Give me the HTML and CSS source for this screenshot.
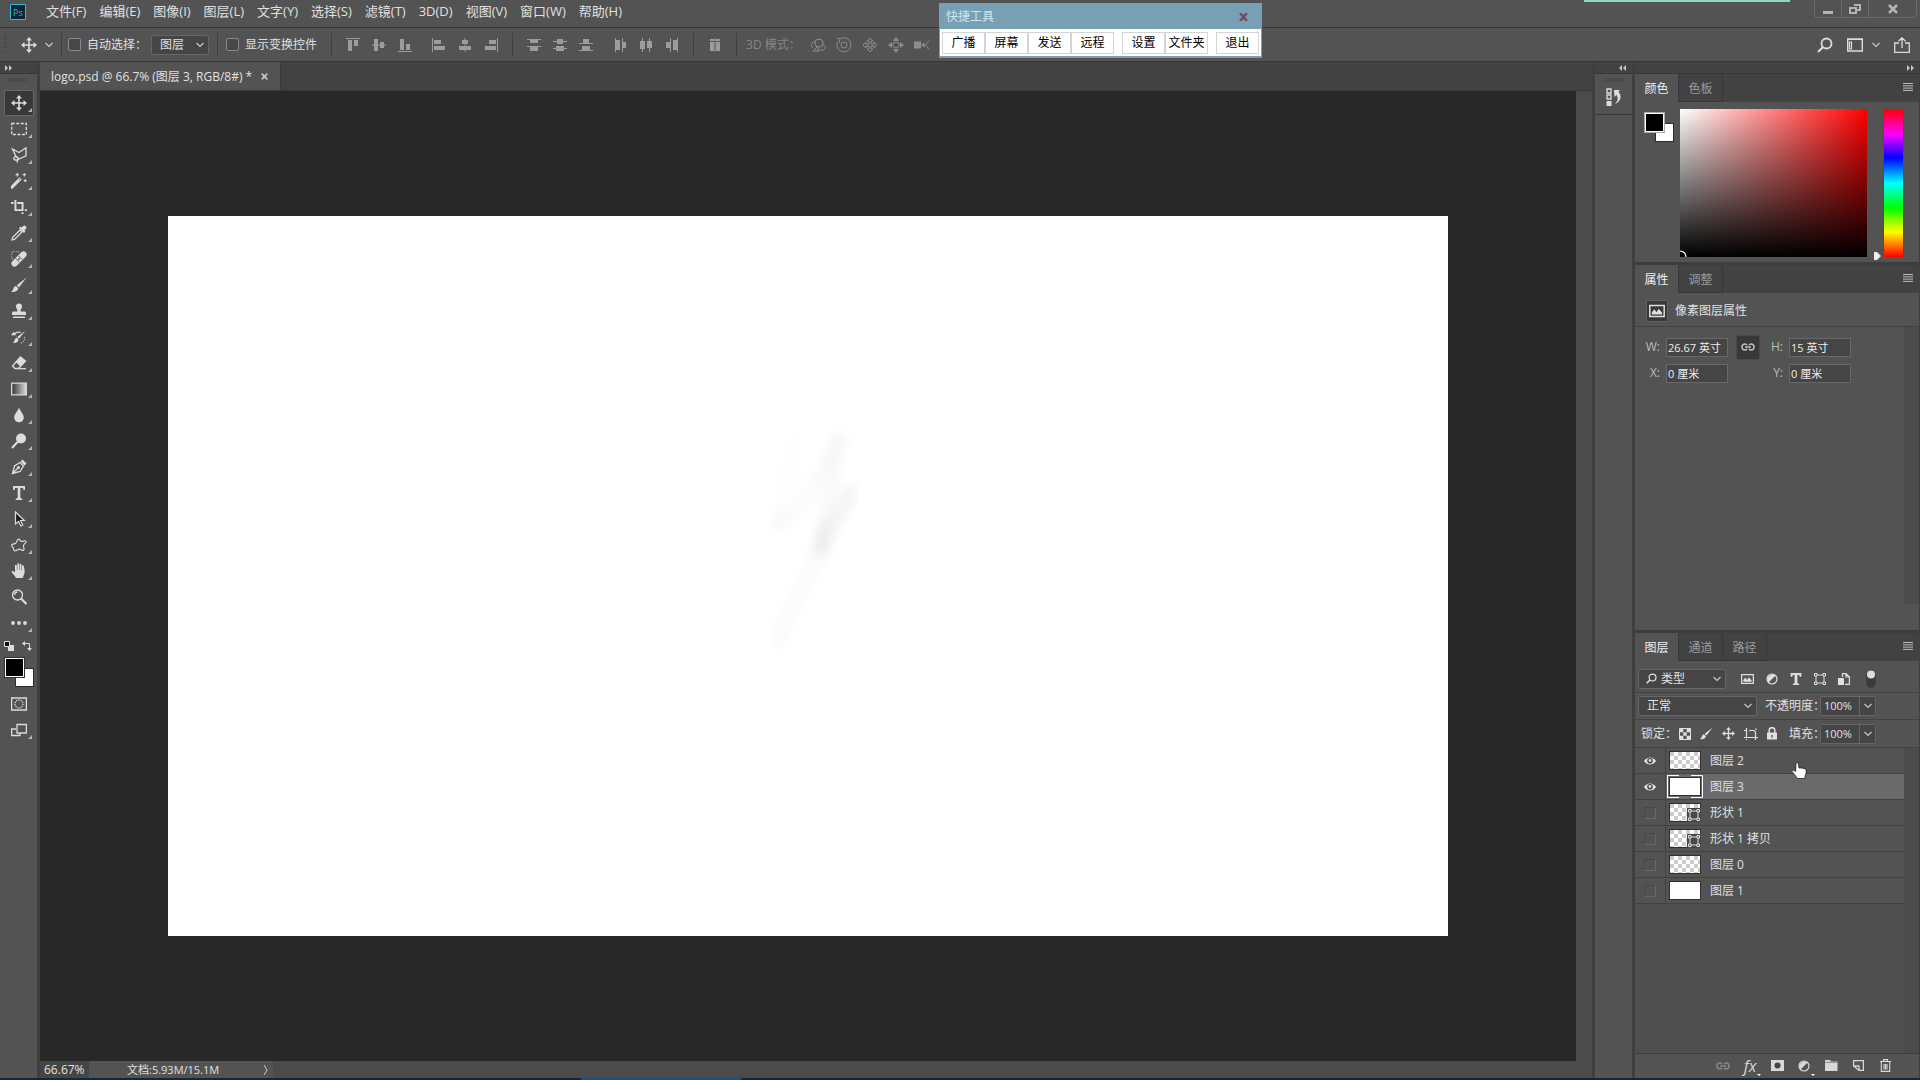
FILE: index.html
```html
<!DOCTYPE html>
<html lang="zh-CN">
<head>
<meta charset="utf-8">
<title>logo.psd</title>
<link rel="stylesheet" href="styles.css">
</head>
<body>
<svg class="sprite" aria-hidden="true">
  <symbol id="chev" viewBox="0 0 8 6"><path d="M0.5 1l3.5 3.500l3.500-3.500" fill="none" stroke="currentColor" stroke-width="1.200"/></symbol>
  <symbol id="move" viewBox="0 0 16 16"><path d="M8 0l3 3.500H8.800V7.200H12.500V5L16 8l-3.500 3V8.800H8.800v3.700H11L8 16l-3-3.500h2.200V8.800H3.500V11L0 8l3.500-3v2.200h3.700V3.500H5z" fill="currentColor"/></symbol>
  <symbol id="menu3" viewBox="0 0 10 8"><path d="M0 .5h10M0 2.800h10M0 5.100h10M0 7.400h10" stroke="currentColor"/></symbol>
  <symbol id="search" viewBox="0 0 16 16"><circle cx="9.500" cy="6.500" r="5" fill="none" stroke="currentColor" stroke-width="1.800"/><path d="M6 10l-5 5" stroke="currentColor" stroke-width="2.200"/></symbol>
  <symbol id="link" viewBox="0 0 14 8"><path d="M6 2.200C5.500 1.300 4.800 1 4 1a3 3 0 0 0 0 6c.8 0 1.500-.3 2-1.200M8 2.200C8.500 1.300 9.200 1 10 1a3 3 0 0 1 0 6c-.8 0-1.500-.3-2-1.200M4 4h6" fill="none" stroke="currentColor" stroke-width="1.500"/></symbol>
  <symbol id="brush" viewBox="0 0 16 16"><path d="M15.500.5L8 10.500 5.800 8.300z" fill="currentColor"/><path d="M5 9l2.300 2.300C7 14 4 15.500 0 15c2.500-1.200 2-5.500 5-6z" fill="currentColor"/></symbol>
  <symbol id="half" viewBox="0 0 12 12"><circle cx="6" cy="6" r="5" fill="none" stroke="currentColor" stroke-width="1.200"/><path d="M9.500 2.500A5 5 0 0 0 2.500 9.500z" fill="currentColor"/></symbol>
  <symbol id="shape" viewBox="0 0 12 12"><path d="M2 2h8v8H2z" fill="none" stroke="currentColor"/><path d="M.5.5h2.500v2.500H.5zM9 .5h2.500v2.500H9zM.5 9h2.500v2.500H.5zM9 9h2.500v2.500H9z" fill="#535353" stroke="currentColor"/></symbol>
  <symbol id="pic" viewBox="0 0 14 12"><path d="M.7 1.200h12.600v9.600H.7z" fill="none" stroke="currentColor" stroke-width="1.300"/><path d="M2.500 9V7l2.200-2.500L6.500 7l2-3 3 3.500V9z" fill="currentColor"/></symbol>
</svg>

<header class="menubar">
  <svg class="ps" viewBox="0 0 16 16"><path d="M.5.5h15v15H.5z" fill="#0b2733" stroke="#35b6dc"/><text x="3" y="11.500">Ps</text></svg>
  <nav class="menus">
    <button>文件(F)</button><button>编辑(E)</button><button>图像(I)</button><button>图层(L)</button><button>文字(Y)</button><button>选择(S)</button><button>滤镜(T)</button><button>3D(D)</button><button>视图(V)</button><button>窗口(W)</button><button>帮助(H)</button>
  </nav>
  <div class="winbtns">
    <button aria-label="最小化"><svg width="10" height="10" viewBox="0 0 10 10"><path d="M0 7h10v3H0z" fill="#b4b4b4"/></svg></button>
    <button aria-label="还原"><svg width="12" height="10" viewBox="0 0 12 10"><path d="M5 1h6v5H8M1 4h6v5H1z" fill="none" stroke="#b4b4b4" stroke-width="2"/></svg></button>
    <button class="wclose" aria-label="关闭"><svg width="10" height="10" viewBox="0 0 10 10"><path d="M1 1l8 8M9 1l-8 8" stroke="#b4b4b4" stroke-width="2.500"/></svg></button>
  </div>
</header>

<div class="options">
  <i class="vgrip"></i>
  <svg class="i16 mv"><use href="#move"/></svg>
  <svg class="chev"><use href="#chev"/></svg>
  <i class="sep"></i>
  <label class="chk"><input type="checkbox">自动选择：</label>
  <span class="sel s-target"><select aria-label="选择目标"><option>图层</option></select><svg class="chev"><use href="#chev"/></svg></span>
  <i class="sep"></i>
  <label class="chk"><input type="checkbox">显示变换控件</label>
  <i class="sep s-wide"></i>
  <div class="grp">
    <svg viewBox="0 0 14 14"><path d="M0 .5h14" /><path class="f" d="M2 2h4v11H2zM8 2h4v6H8z"/></svg>
    <svg viewBox="0 0 14 14"><path d="M0 7h14"/><path class="f" d="M2 1h4v12H2zM8 4h4v6H8z"/></svg>
    <svg viewBox="0 0 14 14"><path d="M0 13.500h14"/><path class="f" d="M2 1h4v11H2zM8 6h4v6H8z"/></svg>
  </div>
  <div class="grp">
    <svg viewBox="0 0 14 14"><path d="M.5 0v14"/><path class="f" d="M2 2h7v4H2zM2 8h11v4H2z"/></svg>
    <svg viewBox="0 0 14 14"><path d="M7 0v14"/><path class="f" d="M4 2h6v4H4zM1 8h12v4H1z"/></svg>
    <svg viewBox="0 0 14 14"><path d="M13.500 0v14"/><path class="f" d="M5 2h7v4H5zM1 8h11v4H1z"/></svg>
  </div>
  <i class="sep s-grp"></i>
  <div class="grp">
    <svg viewBox="0 0 14 14"><path d="M0 1.500h14M0 8.500h14"/><path class="f" d="M3 2h8v3H3zM3 9h8v4H3z"/></svg>
    <svg viewBox="0 0 14 14"><path d="M0 3.500h14M0 10.500h14"/><path class="f" d="M4 1h6v5H4zM3 8h8v5H3z"/></svg>
    <svg viewBox="0 0 14 14"><path d="M0 5.500h14M0 12.500h14"/><path class="f" d="M4 1h6v4H4zM3 8h8v4H3z"/></svg>
  </div>
  <div class="grp">
    <svg viewBox="0 0 14 14"><path d="M2.500 0v14M9.500 0v14"/><path class="f" d="M3 2h4v10H3zM10 4h3v6h-3z"/></svg>
    <svg viewBox="0 0 14 14"><path d="M3.500 0v14M10.500 0v14"/><path class="f" d="M1 3h5v8H1zM8 3h5v7H8z"/></svg>
    <svg viewBox="0 0 14 14"><path d="M5.500 0v14M12.500 0v14"/><path class="f" d="M1 4h4v6H1zM8 2h4v10H8z"/></svg>
  </div>
  <i class="sep s-grp"></i>
  <div class="grp"><svg viewBox="0 0 14 14"><path class="f" d="M2 1h4v2H2zM8 1h4v2H8zM2 4h4v9H2zM8 4h4v9H8z"/><path d="M7 0v14"/></svg></div>
  <i class="sep s-grp"></i>
  <span class="mode">3D 模式：</span>
  <div class="grp three">
    <svg viewBox="0 0 16 14"><circle cx="9" cy="5" r="4" fill="none"/><path d="M5 4C1 4 0 8 3 10M13 7c3 1 3 4 0 5H9M8 9v5M7 9l-4 4h5" fill="none"/></svg>
    <svg viewBox="0 0 16 16"><circle cx="8" cy="8" r="3" fill="none"/><path d="M4 2a7 7 0 1 1-2.500 3M1 1l3 1-1 4" fill="none"/></svg>
    <svg viewBox="0 0 16 16"><path d="M8 1l3 3H9v3h3V5l3 3-3 3V9H9v3h2l-3 3-3-3h2V9H4v2L1 8l3-3v2h3V4H5z" fill="none"/></svg>
    <svg viewBox="0 0 16 16"><circle cx="8" cy="8" r="3" fill="none"/><path class="f" d="M8 0l3 4H5zM8 16l3-4H5zM0 8l4-3v6zM16 8l-4-3v6z"/></svg>
    <svg viewBox="0 0 18 12"><path class="f" d="M0 2h8v8H0zM8 6l4-3v6z"/><path d="M17 1l-4 5 4 5" fill="none"/></svg>
  </div>
  <div class="optright">
    <button aria-label="搜索"><svg class="i16"><use href="#search"/></svg></button>
    <button aria-label="工作区"><svg width="16" height="14" viewBox="0 0 16 14"><path d="M.7 1h14.600v12H.7z" fill="none" stroke="currentColor" stroke-width="1.400"/><path d="M1 1.500h14M2.500 4h2v7h-2z" fill="none" stroke="currentColor" stroke-width="1.200"/></svg></button>
    <svg class="chev"><use href="#chev"/></svg>
    <button aria-label="共享"><svg width="16" height="16" viewBox="0 0 16 16"><path d="M5 6H.7v9.300h14.600V6H11M8 11V1M4.500 4.200L8 .8l3.500 3.400" fill="none" stroke="currentColor" stroke-width="1.300"/></svg></button>
  </div>
</div>

<main class="work">
  <aside class="tools">
    <div class="colhead"><svg width="7" height="6" viewBox="0 0 7 6"><path d="M0 0l3 3-3 3zM4 0l3 3-3 3z" fill="#c8c8c8"/></svg></div>
    <i class="hgrip"></i>
    <div class="toollist">
      <button class="on" aria-label="移动"><svg><use href="#move"/></svg></button>
      <button aria-label="选框"><svg viewBox="0 0 16 16"><path d="M.7 2.500h14.600v11H.7z" class="l" stroke-dasharray="3 1.500"/></svg></button>
      <button aria-label="套索"><svg viewBox="0 0 16 16"><path d="M1.500 2l6.500 3.500L15 .8v8L8 12 5 9.500zM5 9.500C2 10 2 13 5 13s3-3 0-3.500M7 12l-1 3.500" class="l"/></svg></button>
      <button aria-label="魔棒"><svg viewBox="0 0 18 18"><path d="M1 16L10 7" stroke="#dcdcdc" stroke-width="3.500" stroke-linecap="round"/><path d="M9 8l2.500-2.500" stroke="#535353"/><path d="M7 0v4M5 2h4M15 0v4M13 2h4M16 7v3M14.500 8.500h3" class="l"/></svg></button>
      <button aria-label="裁剪"><svg viewBox="0 0 18 16"><path d="M0 3.500h3M5 0v11.500h9M7 3.500h6v9M13 14v2M15.500 11.500H18" fill="none" stroke="#dcdcdc" stroke-width="2.200"/></svg></button>
      <button aria-label="吸管"><svg viewBox="0 0 16 16"><path d="M9 5l2 2-7.500 7.500-2.500.5.500-2.500z" class="l"/><path d="M8 3l5 5 1.500-1.500-1-1 2-2.500c.5-1-1.500-3-2.500-2.500L10.500 2.500l-1-1z" fill="#dcdcdc"/></svg></button>
      <button aria-label="修复画笔"><svg viewBox="0 0 18 18"><path d="M4 14L14 4" stroke="#dcdcdc" stroke-width="7" stroke-linecap="round"/><path d="M5.500 8.500l4 4M8.500 5.500l4 4" stroke="#535353"/><path d="M8 9h2M9 8v2" stroke="#535353"/><path d="M2 9A5 5 0 1 1 9 2" class="l" stroke-dasharray="1 1.500"/></svg></button>
      <button aria-label="画笔"><svg><use href="#brush"/></svg></button>
      <button aria-label="图章"><svg viewBox="0 0 16 16"><path d="M5 3.500a3 3 0 1 1 6 0C11 5.500 9.500 6 9.500 8.500H14c1 0 1 1 1 3.500H1c0-2.500 0-3.500 1-3.500h4.500C6.500 6 5 5.500 5 3.500zM2 13.500h12V15H2z" fill="#dcdcdc"/></svg></button>
      <button aria-label="历史画笔"><svg viewBox="0 0 18 16"><path d="M16 1l-7 9-2-2zM6.500 8.500l2 2.500C8 14 5 15 2 14.500c2-1 2-5 4.500-6zM0 6l3-4 3 4z" fill="#dcdcdc"/><path d="M4 4.500C6 2 8 2 11 3" class="l"/><path d="M15 8c1 3-1 6-4 7" class="l" stroke-dasharray="1 1.500"/></svg></button>
      <button aria-label="橡皮擦"><svg viewBox="0 0 16 16"><path d="M9.500 2l5 4-7 7.500H4L1.500 11z" class="l"/><path d="M9.500 2l5 4-5 5.500-5-4.500z" fill="#dcdcdc"/><path d="M8 13.700h7" class="l"/></svg></button>
      <button aria-label="渐变"><svg viewBox="0 0 16 16"><defs><linearGradient id="gr"><stop stop-color="#333"/><stop offset="1" stop-color="#ddd"/></linearGradient></defs><path d="M.7 2.200h14.600v11.600H.7z" fill="url(#gr)" stroke="#dcdcdc" stroke-width="1.300"/></svg></button>
      <button aria-label="模糊"><svg viewBox="0 0 16 16"><path d="M8 .5c1 3.500 4.800 6.500 4.800 10a4.800 4.800 0 0 1-9.600 0C3.200 7 7 4 8 .5z" fill="#dcdcdc"/></svg></button>
      <button aria-label="减淡"><svg viewBox="0 0 16 16"><circle cx="10" cy="5.500" r="5" fill="#dcdcdc"/><path d="M7 8.500L1 15" stroke="#dcdcdc" stroke-width="2"/></svg></button>
      <button aria-label="钢笔"><svg viewBox="0 0 16 16"><path d="M1.500 14.500L3.500 7 9 3.500l3.500 3.500L9 12.500zM2 14l5-5" class="l"/><circle cx="7.500" cy="8.500" r="1.500" fill="#dcdcdc"/><path d="M9.500 2.500L11.500.5l4 4-2 2z" fill="#dcdcdc"/></svg></button>
      <button aria-label="文字"><svg viewBox="0 0 16 16"><path d="M2 1h12v4h-1.500L12 3H9.300v10l2 .7V15H4.700v-1.300l2-.7V3H4l-.5 2H2z" fill="#dcdcdc"/></svg></button>
      <button aria-label="路径选择"><svg viewBox="0 0 16 16"><path d="M4.500 1v12l3-2.500L10 15l1.800-1L9.500 9.500h3.800z" fill="#1c1c1c" stroke="#dcdcdc" stroke-width="1.200"/></svg></button>
      <button aria-label="形状"><svg viewBox="0 0 18 16"><path d="M8 1.500c2-1 2 2.500 4 2.500 3-1 6-1 4.500 1.500-1 1.500-3 2-2.500 4 1 3 1 5-1 4.500-2-.5-3-2-5-1-2 1.500-5 2.500-5 0 0-2-1-2-2-4C0 7 3 7 4.500 6.500 7 5.500 6 3 8 1.500z" class="l"/></svg></button>
      <button aria-label="抓手"><svg viewBox="0 0 16 16"><path d="M5 15C3.500 12 1.500 10.500.3 8.500c1-1.200 2.500-.2 3.700 1V2.500c.2-1 1.600-1 1.800 0V7h.5V1c.2-1 1.700-1 1.900 0v6h.5V1.500c.2-1 1.600-1 1.800 0V7.500h.5V3c.2-1 1.600-1 1.800 0 .3 3 2.500 5.500-1.300 12z" fill="#dcdcdc"/></svg></button>
      <button class="nt" aria-label="缩放"><svg viewBox="0 0 16 16"><circle cx="6.500" cy="6" r="5" class="l"/><path d="M3.500 6a3 3 0 0 1 3-3" class="l"/><path d="M10 9.500l5.500 5.500" stroke="#dcdcdc" stroke-width="2.200"/></svg></button>
      <button aria-label="更多"><svg viewBox="0 0 16 16"><circle cx="2" cy="8" r="1.900" fill="#dcdcdc"/><circle cx="8" cy="8" r="1.900" fill="#dcdcdc"/><circle cx="14" cy="8" r="1.900" fill="#dcdcdc"/></svg></button>
    </div>
    <div class="mini">
      <svg width="10" height="10" viewBox="0 0 10 10"><path d="M4 4h6v6H4z" fill="#ddd"/><path d="M.5.5h5v5h-5z" fill="#111" stroke="#ddd"/></svg>
      <svg width="10" height="10" viewBox="0 0 10 10"><path d="M2 2.500h5.500V8" fill="none" stroke="#ddd"/><path d="M0 2.500L3 0v5zM5 7h5l-2.500 3z" fill="#ddd"/></svg>
    </div>
    <div class="swatch"><i class="bg"></i><i class="fg"></i></div>
    <div class="toollist">
      <button class="nt" aria-label="快速蒙版"><svg viewBox="0 0 16 16"><path d="M.6 2h14.800v12H.6z" class="l"/><circle cx="8" cy="8" r="4" class="l" stroke-dasharray="1.200 1"/></svg></button>
      <button aria-label="屏幕模式"><svg viewBox="0 0 16 16"><path d="M5 7H.6v6.500H9V11M6 2.500h9.400V11H6z" class="l"/></svg></button>
    </div>
  </aside>

  <section class="doc">
    <div class="doctabs"><span class="doctab">logo.psd @ 66.7% (图层 3, RGB/8#) *<button aria-label="关闭文档"><svg width="7" height="7" viewBox="0 0 7 7"><path d="M.7.7l5.600 5.600M6.300.7L.7 6.300" stroke="#c4c4c4" stroke-width="1.800"/></svg></button></span></div>
    <div class="view">
      <div class="canvas">
        <div class="artboard">
          <svg viewBox="0 0 1280 720">
            <defs><filter id="soft"><feGaussianBlur stdDeviation="4"/></filter></defs>
            <g fill="none" stroke-linecap="round" stroke="#000" filter="url(#soft)">
              <path d="M626 228l-16 80" stroke-width="12" stroke-opacity=".012"/>
              <path d="M610 308C634 300 650 260 670 225" stroke-width="16" stroke-opacity=".015"/>
              <path d="M670 225C664 260 656 300 654 335" stroke-width="18" stroke-opacity=".02"/>
              <path d="M682 276l-28 52" stroke-width="18" stroke-opacity=".034"/>
              <path d="M654 310l-2 22" stroke-width="15" stroke-opacity=".02"/>
              <path d="M650 340C636 370 622 395 610 424" stroke-width="18" stroke-opacity=".016"/>
            </g>
          </svg>
        </div>
      </div>
      <div class="vscroll"></div>
    </div>
    <div class="status">
      <input class="zoom" aria-label="缩放比例" value="66.67%">
      <button class="info"><span>文档:5.93M/15.1M</span><svg width="5" height="10" viewBox="0 0 5 10"><path d="M1 0l3 5-3 5" fill="none" stroke="#ccc"/></svg></button>
    </div>
  </section>

  <aside class="icons">
    <div class="colhead right"><svg width="7" height="6" viewBox="0 0 7 6"><path d="M3 0L0 3l3 3zM7 0L4 3l3 3z" fill="#c8c8c8"/></svg></div>
    <div class="histbox"><i class="hgrip"></i>
      <button aria-label="历史记录"><svg width="16" height="18" viewBox="0 0 16 18"><path d="M1 1h4v4H1zM1 7h4v4H1z" fill="none" stroke="#ddd" stroke-width="1.300"/><path d="M.5 13h5v5h-5zM8 2h6l-1.500 2c4 4 2 10-3.500 12 3-3 3.500-6 1.500-9L8.500 9z" fill="#ddd"/></svg></button>
    </div>
  </aside>

  <aside class="panels">
    <div class="colhead right"><svg width="7" height="6" viewBox="0 0 7 6"><path d="M0 0l3 3-3 3zM4 0l3 3-3 3z" fill="#c8c8c8"/></svg></div>
    <section class="panel p-color">
      <div class="tabs"><button class="on">颜色</button><button>色板</button><svg class="menu3"><use href="#menu3"/></svg></div>
      <div class="colorbody">
        <div class="swatch ring"><i class="bg"></i><i class="fg"></i></div>
        <div class="field"><svg width="7" height="7" viewBox="0 0 7 7"><path d="M0 1a6 6 0 0 1 6 6" fill="none" stroke="#fff" stroke-width="1.200"/></svg></div>
        <div class="hue"><svg width="8" height="8" viewBox="0 0 8 8"><path d="M0 0h3l4 4-4 4H0z" fill="#eee"/></svg></div>
      </div>
    </section>
    <section class="panel p-prop">
      <div class="tabs"><button class="on">属性</button><button>调整</button><svg class="menu3"><use href="#menu3"/></svg></div>
      <div class="prophead"><span class="picbox"><svg width="16" height="14"><use href="#pic"/></svg></span>像素图层属性</div>
      <div class="propbody">
        <div class="propgrid">
          <label for="pw">W:</label><input id="pw" value="26.67 英寸">
          <button class="lk" aria-label="链接"><svg width="14" height="8"><use href="#link"/></svg></button>
          <label for="ph">H:</label><input id="ph" value="15 英寸">
          <label for="px">X:</label><input id="px" value="0 厘米"><span></span>
          <label for="py">Y:</label><input id="py" value="0 厘米">
        </div>
        <div class="pscroll"></div>
      </div>
    </section>
    <section class="panel p-layers">
      <div class="tabs"><button class="on">图层</button><button>通道</button><button>路径</button><svg class="menu3"><use href="#menu3"/></svg></div>
      <div class="lrow filter">
        <span class="sel s-kind"><svg class="lens"><use href="#search"/></svg><select aria-label="筛选"><option>类型</option></select><svg class="chev"><use href="#chev"/></svg></span>
        <div class="ficons">
          <svg width="13" height="12"><use href="#pic"/></svg>
          <svg width="12" height="12"><use href="#half"/></svg>
          <svg width="12" height="12" viewBox="2 1 12 14"><path d="M2 1h12v4h-1.500L12 3H9.300v10l2 .7V15H4.700v-1.300l2-.7V3H4l-.5 2H2z" fill="currentColor" stroke="currentColor" stroke-width=".6"/></svg>
          <svg width="12" height="12"><use href="#shape"/></svg>
          <svg width="12" height="12" viewBox="0 0 12 12"><path d="M4.500 4V.6H8L11.400 4v7.400H7M8 .6V4h3.400" fill="none" stroke="currentColor" stroke-width="1.200"/><path d="M0 5h6v7H0z" fill="currentColor"/></svg>
        </div>
        <svg class="toggle" width="10" height="18" viewBox="0 0 10 18"><rect x=".5" y=".5" width="9" height="17" rx="4.500" fill="#3a3a3a" stroke="#444"/><circle cx="5" cy="4.500" r="4" fill="#ddd"/></svg>
      </div>
      <div class="lrow">
        <span class="sel s-blend"><select aria-label="混合模式"><option>正常</option></select><svg class="chev"><use href="#chev"/></svg></span>
        <label class="rl" for="op">不透明度：</label><span class="num"><input id="op" value="100%"><button aria-label="不透明度滑块"><svg class="chev"><use href="#chev"/></svg></button></span>
      </div>
      <div class="lrow last">
        <span class="lockl">锁定：</span>
        <div class="ficons locks">
          <svg width="12" height="12" viewBox="0 0 12 12"><path d="M.5.5h11v11H.5z" fill="none" stroke="currentColor"/><path d="M1 1h3.300v3.300H1zM7.700 1H11v3.300H7.700zM4.300 4.300h3.400v3.400H4.300zM1 7.700h3.300V11H1zM7.700 7.700H11V11H7.700z" fill="currentColor"/></svg>
          <svg width="13" height="13"><use href="#brush"/></svg>
          <svg width="13" height="13"><use href="#move"/></svg>
          <svg width="14" height="12" viewBox="0 0 14 12"><path d="M0 2.500h2M2.500 0v9.500M5 2.500h5l1.500 1.500v5.500M0 9.500h14M11.500 9.500V12M12 .5V2M2.500 11v1" fill="none" stroke="currentColor" stroke-width="1.200"/></svg>
          <svg width="10" height="13" viewBox="0 0 10 13"><path d="M2.200 6V3.500a2.800 2.800 0 0 1 5.600 0V6" fill="none" stroke="currentColor" stroke-width="1.500"/><path d="M0 5.500h10V12.500H0z" fill="currentColor"/><path d="M5 8v2.500" stroke="#535353" stroke-width="1.300"/></svg>
        </div>
        <label class="rl" for="fi">填充：</label><span class="num"><input id="fi" value="100%"><button aria-label="填充滑块"><svg class="chev"><use href="#chev"/></svg></button></span>
      </div>
      <div class="listwrap">
        <ul class="layers">
          <li><label class="vis"><input type="checkbox" checked aria-label="显示图层 2"><svg viewBox="0 0 12 10"><path d="M0 5C3 .3 9 .3 12 5 9 9.700 3 9.700 0 5z" fill="#e2e2e2"/><circle cx="6" cy="4.700" r="2.800" fill="#444"/><circle cx="6" cy="4.500" r="1.400" fill="#ddd"/></svg></label><span class="thumb tr"></span>图层 2</li>
          <li class="cur"><label class="vis"><input type="checkbox" checked aria-label="显示图层 3"><svg viewBox="0 0 12 10"><path d="M0 5C3 .3 9 .3 12 5 9 9.700 3 9.700 0 5z" fill="#e2e2e2"/><circle cx="6" cy="4.700" r="2.800" fill="#444"/><circle cx="6" cy="4.500" r="1.400" fill="#ddd"/></svg></label><span class="thumb"><svg class="brk" viewBox="0 0 36 23"><path d="M12 .5H.5v22H12M24 .5h11.500v22H24" fill="none" stroke="#fff"/></svg></span>图层 3</li>
          <li><label class="vis"><input type="checkbox" aria-label="显示形状 1"></label><span class="thumb tr"><svg class="badge"><use href="#shape"/></svg></span>形状 1</li>
          <li><label class="vis"><input type="checkbox" aria-label="显示形状 1 拷贝"></label><span class="thumb tr"><svg class="badge"><use href="#shape"/></svg></span>形状 1 拷贝</li>
          <li><label class="vis"><input type="checkbox" aria-label="显示图层 0"></label><span class="thumb tr"></span>图层 0</li>
          <li><label class="vis"><input type="checkbox" aria-label="显示图层 1"></label><span class="thumb"></span>图层 1</li>
        </ul>
        <div class="pscroll"></div>
        <svg class="cursor" viewBox="0 0 16 17"><path d="M5 1.500c.5-1.300 2-1 2.200 0L8 6c2-.3 6 .3 7 1.500.7 3-.5 5-1 6.500v2.500H6.500C5 14 2.500 11.500.7 9c.8-1.300 2.800-.5 4 .5z" fill="#fff" stroke="#222" stroke-width=".8"/></svg>
      </div>
      <div class="lfoot">
        <button class="dim" aria-label="链接图层"><svg width="14" height="8"><use href="#link"/></svg></button>
        <button class="fx sub">fx</button>
        <button aria-label="添加蒙版"><svg width="13" height="11" viewBox="0 0 13 11"><path d="M0 0h13v11H0z" fill="currentColor"/><circle cx="6.500" cy="5.500" r="3" fill="#444"/></svg></button>
        <button class="sub" aria-label="调整图层"><svg width="12" height="12"><use href="#half"/></svg></button>
        <button aria-label="新建组"><svg width="13" height="11" viewBox="0 0 13 11"><path d="M0 0h5l1 1.500h6.500V11H0z" fill="currentColor"/><path d="M0 2.300h12" stroke="#535353" stroke-width=".6"/></svg></button>
        <button aria-label="新建图层"><svg width="11" height="11" viewBox="0 0 11 11"><path d="M.6.6h9.800v9.800H6L.6 6zM.6 6H6v4.400" fill="none" stroke="currentColor" stroke-width="1.300"/></svg></button>
        <button aria-label="删除"><svg width="11" height="13" viewBox="0 0 11 13"><path d="M0 2.500h11M3.500 2V.6h4V2M1.300 3v9.400h8.400V3M4 5v5.500M5.500 5v5.500M7 5v5.500" fill="none" stroke="currentColor" stroke-width="1.100"/></svg></button>
      </div>
    </section>
  </aside>
</main>
<footer class="edge"><i></i></footer>

<i class="teal"></i>
<div class="quick">
  <div class="qtitle">快捷工具<button aria-label="关闭"><svg width="9" height="8" viewBox="0 0 9 8"><path d="M1 0l7 8M8 0L1 8" stroke="#7c4257" stroke-width="2.200"/></svg></button></div>
  <div class="qbtns"><div><button>广播</button><button>屏幕</button><button>发送</button><button>远程</button></div><div><button>设置</button><button>文件夹</button></div><div><button>退出</button></div></div>
</div>
</body>
</html>
```
FILE: styles.css
```css
* { box-sizing: border-box; }
html, body { height: 100%; margin: 0; }
body {
  display: flex; flex-direction: column; overflow: hidden;
  background: #535353; color: #e0e0e0;
  font: 12px/16px "Open Sans", "Noto Sans CJK SC", sans-serif;
}
button, input, select { font: inherit; color: inherit; margin: 0; padding: 0; border: 0; background: none; border-radius: 0; }
button { display: flex; align-items: center; justify-content: center; white-space: nowrap; }
svg { display: block; flex: none; }
i { display: block; flex: none; }
.sprite { position: absolute; width: 0; height: 0; }
.chev { width: 8px; height: 6px; color: #c8c8c8; }
.i16 { width: 16px; height: 16px; }

/* menu bar */
.menubar { display: flex; height: 28px; flex: none; border-bottom: 1px solid #383838; padding-left: 10px; }
.ps { width: 16px; height: 16px; margin-top: 4px; }
.ps text { font: 9px "Open Sans", sans-serif; fill: #35b6dc; }
.menus { display: flex; gap: 13px; margin-left: 20px; padding-bottom: 6px; font-size: 13px; }
.winbtns { display: flex; margin: 0 3px 9px auto; border: 1px solid #6a6a6a; border-top: 0; border-radius: 0 0 4px 4px; }
.winbtns button { width: 27px; border-right: 1px solid #6a6a6a; }
.winbtns .wclose { width: 47px; border: 0; }

/* options bar */
.options { display: flex; align-items: center; height: 34px; flex: none; border-bottom: 1px solid #383838; padding: 0 10px 0 4px; }
.vgrip { width: 3px; height: 20px; background: repeating-linear-gradient(#444 0 1px, #5a5a5a 1px 2px); margin-right: 14px; }
.options > .chev { margin: 0 8px; }
.mv { color: #dcdcdc; }
.sep { width: 1px; height: 23px; background: #3f3f3f; margin: 0 8px; }
.options > .chev + .sep { margin: 0 6px 0 0; }
.options > .s-wide { margin: 0 0 0 14px; }
.options > .s-grp { margin: 0; }
.chk { display: flex; align-items: center; gap: 6px; white-space: nowrap; }
.chk input { appearance: none; width: 13px; height: 13px; border: 1px solid #8a8a8a; border-radius: 2px; background: #484848; }
.sel { display: flex; align-items: center; position: relative; height: 20px; background: #454545; border: 1px solid #666; border-radius: 2px; }
.sel select { appearance: none; flex: 1; min-width: 0; height: 18px; padding-left: 8px; outline: 0; }
.sel .chev { position: absolute; right: 4px; }
.s-target { width: 58px; margin-left: 4px; }
.grp { display: flex; gap: 12px; margin: 0 14px; }
.grp svg { width: 14px; height: 14px; stroke: #9c9c9c; fill: #9c9c9c; }
.grp .f { stroke: none; }
.grp + .grp { margin-left: 6px; }
.mode { color: #858585; white-space: nowrap; margin-left: 9px; }
.options > .three { gap: 10px; margin-left: 9px; }
.three svg { width: 16px; height: 16px; stroke: #8e8e8e; fill: #8e8e8e; }
.optright { display: flex; align-items: center; gap: 14px; margin-left: auto; color: #dcdcdc; }
.optright .chev { margin: 0 0 0 -5px; }

/* workspace */
.work { display: flex; flex: 1; min-height: 0; }
.colhead { display: flex; align-items: center; height: 12px; flex: none; padding: 0 5px; background: #424242; border-bottom: 1px solid #383838; }
.colhead.right { justify-content: flex-end; }
.hgrip { width: 20px; height: 4px; margin: 4px auto 0; background: repeating-linear-gradient(90deg, #414141 0 1px, #565656 1px 2px); }
.tools { width: 40px; flex: none; border-right: 3px solid #3f3f3f; }
.tools .hgrip { margin-bottom: 8px; }
.toollist { padding: 0 3px 0 4px; }
.toollist button { position: relative; width: 100%; height: 26px; border: 1px solid transparent; border-radius: 2px; color: #dcdcdc; }
.toollist svg { width: 16px; height: 16px; }
.toollist .on { background: #383838; border-color: #686868; }
.toollist button::after { content: ""; position: absolute; right: 1px; bottom: 3px; border: 2px solid; border-color: transparent #b4b4b4 #b4b4b4 transparent; }
.toollist .nt::after { display: none; }
.l { fill: none; stroke: #dcdcdc; stroke-width: 1.3px; }
.mini { display: flex; justify-content: space-between; padding: 5px 5px 7px 4px; }
.swatch { position: relative; width: 29px; height: 29px; margin-left: 5px; }
.swatch i { position: absolute; width: 19px; height: 19px; border: 1px solid #2c2c2c; }
.swatch .bg { right: 0; bottom: 0; background: #fff; }
.swatch .fg { left: 0; top: 0; background: #000; border: 1px solid #fff; outline: 1px solid #333; }
.swatch + .toollist { padding-top: 4px; }

.doc { display: flex; flex-direction: column; flex: 1; min-width: 0; }
.doctabs { display: flex; height: 29px; flex: none; background: #424242; border-bottom: 1px solid #383838; }
.doctab { display: flex; align-items: center; gap: 9px; padding: 1px 12px 0 11px; background: #535353; border-right: 1px solid #383838; white-space: nowrap; }
.view { display: flex; flex: 1; min-height: 0; }
.canvas { display: flex; align-items: center; justify-content: center; flex: 1; min-width: 0; background: #282828; }
.artboard { width: 1280px; max-width: 100%; aspect-ratio: 16 / 9; background: #fff; }
.artboard svg { width: 100%; height: 100%; }
.vscroll { width: 16px; background: #4b4b4b; }
.status { display: flex; height: 17px; flex: none; background: #4b4b4b; }
.zoom { width: 49px; padding-left: 4px; background: #454545; }
.info { width: 184px; background: #535353; justify-content: space-between; padding: 0 5px 0 38px; font-size: 11px; }

.icons { width: 43px; flex: none; border: 3px solid #3f3f3f; border-width: 0 3px; }
.icons .colhead { padding-right: 6px; }
.histbox { display: flow-root; height: 41px; border-bottom: 1px solid #383838; }
.histbox button { margin: 6px auto 0; }

/* panels */
.panels { display: flex; flex-direction: column; width: 285px; flex: none; border-right: 1px solid #3f3f3f; }
.panel { flex: none; }
.tabs { display: flex; height: 28px; flex: none; background: #424242; }
.tabs button { width: 44px; color: #9a9a9a; border-right: 1px solid #383838; padding-top: 1px; }
.tabs button:not(.on) { border-bottom: 1px solid #383838; padding-top: 2px; }
.tabs .on { background: #535353; color: #f0f0f0; }
.menu3 { width: 10px; height: 8px; color: #bdbdbd; margin: 9px 6px 0 auto; }
.p-color { height: 191px; border-bottom: 3px solid #3d3d3d; }
.colorbody { display: flex; padding: 7px 15px 0 10px; }
.ring { margin: 4px 6px 0 0; }
.ring .fg { outline: 1px solid #aaa; }
.field { display: flex; align-items: flex-end; flex: 1; height: 148px; background: linear-gradient(transparent, #000), linear-gradient(90deg, #fff, #f00); }
.hue { position: relative; width: 21px; flex: none; height: 148px; margin-left: 16px; border: 1px solid #5d4848; border-width: 0 1px; background: linear-gradient(#f00, #f0f 17%, #00f 33%, #0ff 50%, #0f0 67%, #ff0 83%, #f00); }
.hue svg { position: absolute; left: -10px; bottom: -3px; }
.p-prop { display: flex; flex-direction: column; height: 368px; border-bottom: 3px solid #3d3d3d; }
.prophead { display: flex; align-items: center; gap: 7px; height: 34px; padding: 2px 0 0 11px; border-bottom: 1px solid #424242; }
.picbox { display: flex; align-items: center; justify-content: center; width: 22px; height: 22px; background: #383838; border: 1px solid #616161; border-radius: 2px; }
.propbody { display: flex; flex: 1; min-height: 0; }
.propgrid { display: grid; grid-template-columns: 31px 62px 41px 20px 62px; grid-template-rows: 26px 26px; align-content: start; align-items: center; flex: 1; padding-top: 7px; color: #bdbdbd; }
.propgrid label { text-align: right; padding-right: 6px; }
.propgrid input { width: 100%; height: 19px; padding-left: 1px; border: 1px solid #686868; background: #454545; color: #eee; font-size: 11px; }
.propgrid .lk { width: 24px; height: 25px; margin-left: 8px; background: #383838; border: 1px solid #4a4a4a; border-radius: 2px; }
.pscroll { width: 15px; flex: none; background: #4b4b4b; }
.propbody .pscroll { margin-bottom: 26px; }

.p-layers { display: flex; flex-direction: column; flex: 1; min-height: 0; }
.lrow { display: flex; align-items: center; height: 27px; flex: none; padding-left: 3px; border-bottom: 1px solid #424242; }
.filter { height: 32px; padding-top: 4px; }
.last { height: 28px; }
.s-kind { width: 88px; }
.s-kind select { padding-left: 4px; }
.lens { width: 11px; height: 11px; margin-left: 7px; }
.ficons { display: flex; align-items: center; gap: 12px; margin-left: 15px; }
.toggle { margin-left: 16px; }
.s-blend { width: 119px; }
.rl { white-space: nowrap; width: 55px; margin-left: 8px; }
.num { display: flex; height: 20px; border: 1px solid #666; border-radius: 2px; background: #454545; width: 56px; }
.num input { width: 38px; padding-left: 3px; font-size: 11px; }
.num button { flex: 1; border-left: 1px solid #666; }
.lockl { width: 38px; padding-left: 3px; white-space: nowrap; }
.ficons.locks { gap: 9px; margin: 0 0 0 3px; width: 99px; }
.last .rl { width: 31px; margin-left: 11px; }
.listwrap { position: relative; display: flex; flex: 1; min-height: 0; background: #4f4f4f; }
.layers { flex: 1; min-width: 0; margin: 0; padding: 0; list-style: none; }
.layers li { display: flex; align-items: center; height: 26px; border-bottom: 1px solid #424242; background: #535353; }
.layers .cur { background: #6a6a6a; }
.vis { display: flex; align-items: center; justify-content: center; width: 31px; height: 25px; border-right: 1px solid #424242; background: #535353; }
.vis input { appearance: none; width: 12px; height: 12px; border: 1px solid #484848; border-right-color: #686868; border-bottom-color: #686868; }
.vis input:checked { display: none; }
.vis svg { width: 12px; height: 10px; }
.thumb { position: relative; width: 32px; height: 19px; margin: 0 9px 0 3px; border: 1px solid #303030; background: #fff; }
.thumb.tr { background: repeating-conic-gradient(#fff 0 25%, #ccc 0 50%) 0 0 / 8px 8px; }
.brk { position: absolute; left: -3px; top: -3px; width: 36px; height: 23px; }
.badge { position: absolute; right: -1px; bottom: -1px; width: 14px; height: 14px; padding: 1px; background: #484848; }
.cursor { position: absolute; left: 156px; top: 14px; width: 16px; height: 17px; }
.lfoot { display: flex; align-items: center; justify-content: flex-end; gap: 7px; height: 25px; flex: none; padding: 0 24px 1px 0; border-top: 1px solid #3d3d3d; color: #d8d8d8; }
.lfoot button { position: relative; width: 20px; height: 20px; }
.lfoot .dim { color: #858585; }
.lfoot .fx { font: italic 16px/18px "Open Sans", sans-serif; }
.sub::after { content: ""; position: absolute; right: -1px; bottom: 0; border: 2px solid transparent; border-top-color: #fff; border-bottom: 0; }

.edge { display: flex; height: 2px; flex: none; background: #10283c; padding-left: 581px; }
.edge i { width: 160px; background: #1f5180; }

/* windows floating over the editor */
.teal { position: absolute; right: 130px; top: 0; width: 206px; height: 2px; background: #8fd9c3; }
.quick { position: absolute; left: 939px; top: 3px; width: 323px; height: 55px; background: #fff; border: 1px solid #78a0b4; border-bottom-width: 2px; }
.qtitle { display: flex; align-items: center; justify-content: space-between; height: 25px; padding: 0 13px 0 6px; background: #78a0b4; color: #d0e6ee; }
.qbtns { display: flex; gap: 8px; padding: 3px 2px 2px; color: #000; }
.qbtns div { display: flex; }
.qbtns button { width: 43px; height: 22px; border: 1px solid #d4d4d4; }
```
